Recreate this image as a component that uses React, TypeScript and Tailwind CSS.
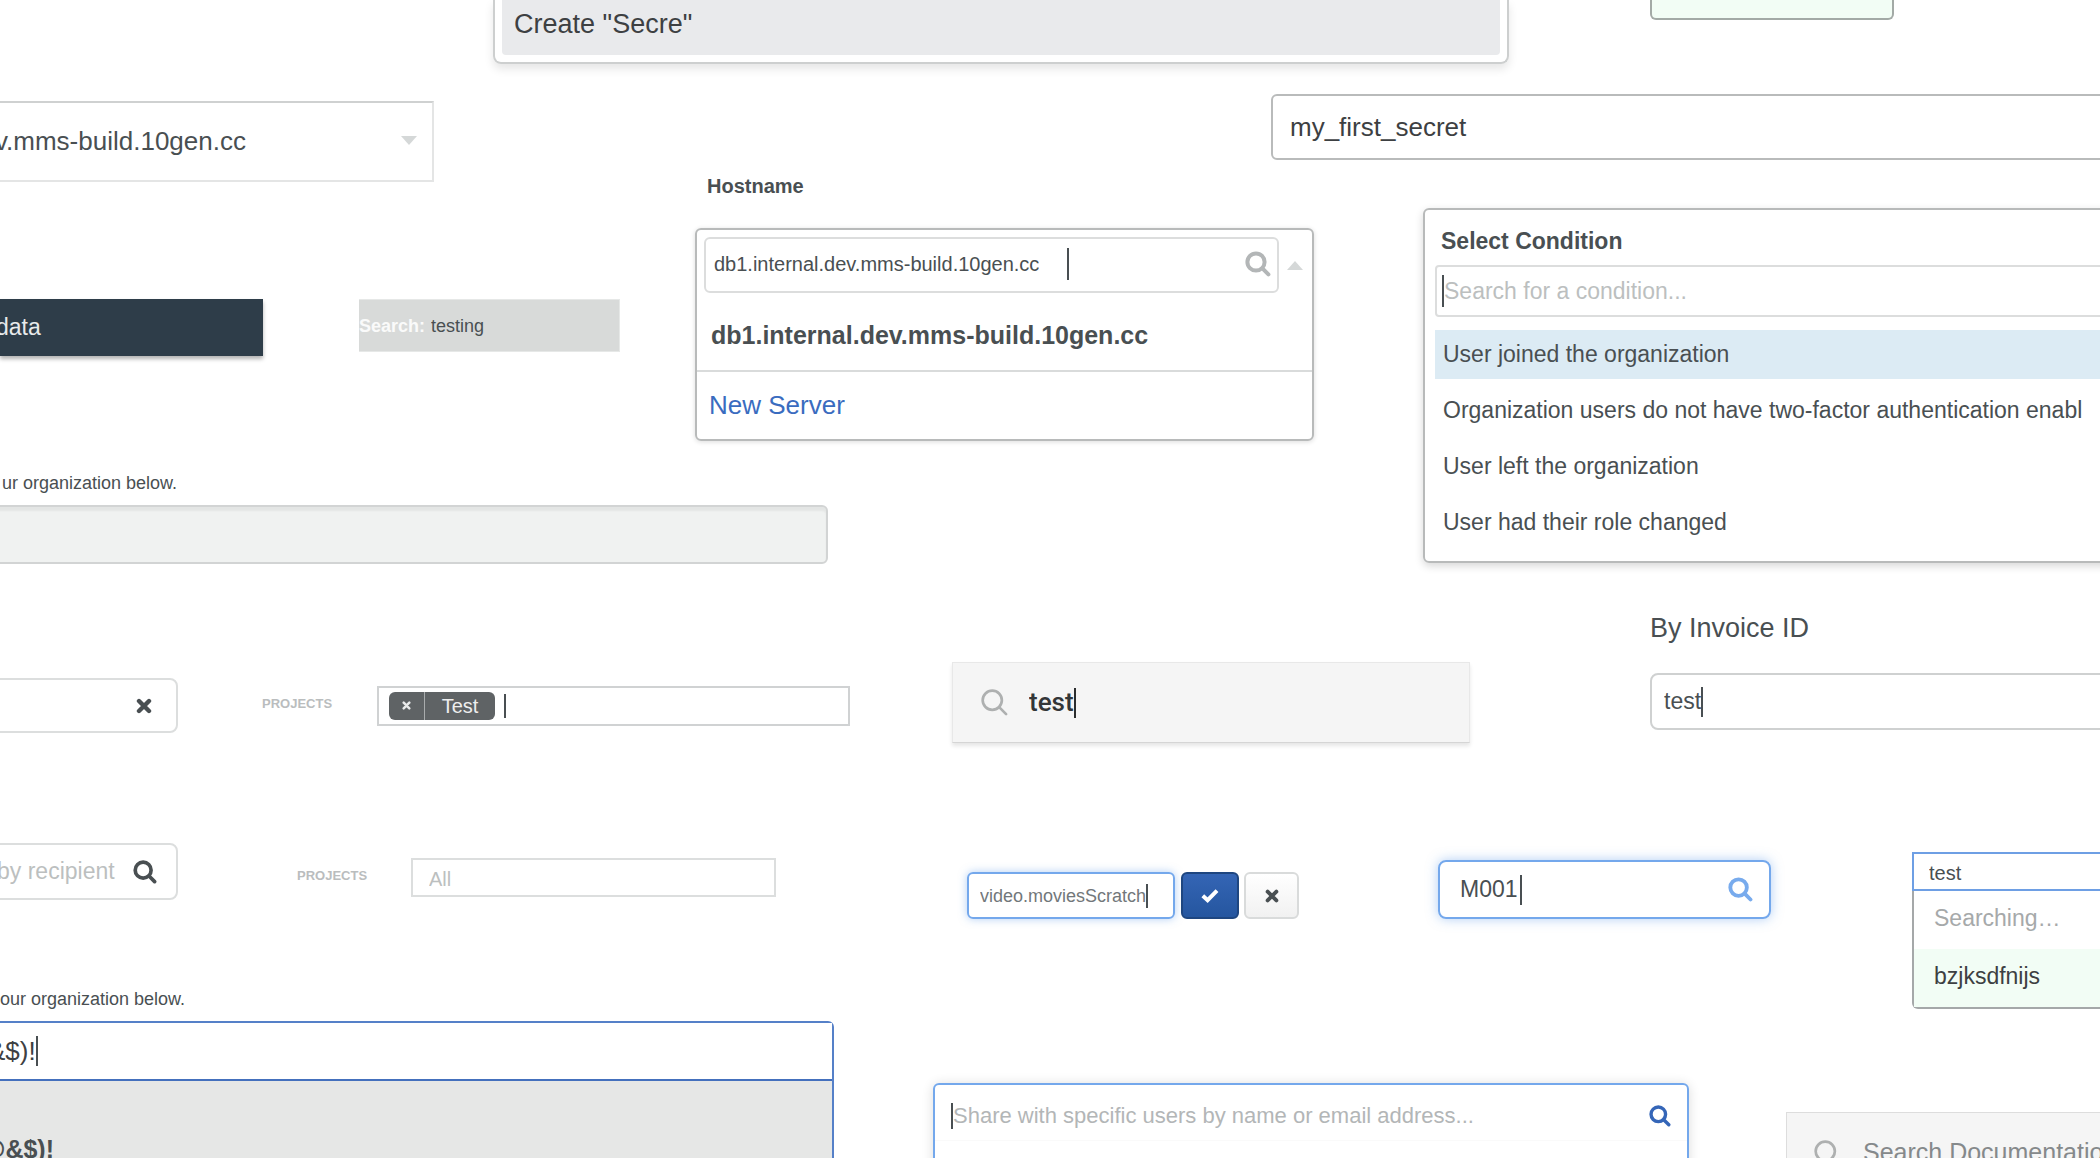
// src/App.tsx
import type { ReactNode } from 'react';

interface CaretProps {
  className?: string;
}

interface IconProps {
  className?: string;
  weight?: number;
}

interface ProjectsProps {
  id: string;
  children: ReactNode;
}

// blinking cursor of a focused text box
function Caret({ className = 'h-8 bg-[#494f52]' }: CaretProps) {
  return <span className={`w-[2px] shrink-0 ${className}`} />;
}

function SearchIcon({ className = 'size-6', weight = 4 }: IconProps) {
  return (
    <svg className={`shrink-0 ${className}`} viewBox="0 0 26 26" fill="none" stroke="currentColor" strokeWidth={weight} strokeLinecap="round" aria-hidden="true">
      <circle cx="11" cy="11" r="8.6" />
      <path d="M17.4 17.4 23.4 23.4" />
    </svg>
  );
}

function CrossIcon({ className = 'size-4' }: IconProps) {
  return (
    <svg className={`shrink-0 ${className}`} viewBox="0 0 16 16" fill="none" stroke="currentColor" strokeWidth="4.4" strokeLinecap="round" aria-hidden="true">
      <path d="M3 3 13 13M13 3 3 13" />
    </svg>
  );
}

function Projects({ id, children }: ProjectsProps) {
  return (
    <>
      <label htmlFor={id} className="w-[115px] pb-1 text-[13px] leading-5 font-bold text-[#babdbe]">PROJECTS</label>
      {children}
    </>
  );
}

const conditions = [
  'User joined the organization',
  'Organization users do not have two-factor authentication enabl',
  'User left the organization',
  'User had their role changed',
];

export default function App() {
  return (
    <main className="h-screen overflow-hidden bg-white font-['Liberation_Sans',Arial,sans-serif] text-[#494f52]">
      {/* tops of the first row */}
      <div className="flex items-start">
        <div className="ml-[493px] h-16 w-[1016px] rounded-b-lg border-2 border-t-0 border-[#cdcfcf] px-[7px] pb-[7px] shadow-[0_5px_10px_rgba(0,0,0,0.1)]">
          <button type="button" className="flex h-full w-full items-center rounded-b-sm bg-[#e9eaec] pb-[6px] pl-3 text-[27px] text-[#3d4042]">
            Create "Secre"
          </button>
        </div>
        <div className="ml-[141px] h-5 w-[244px] rounded-b-md border-2 border-t-0 border-[#a3aaa6] bg-[#f2fdf5]" />
      </div>

      <div className="flex items-start">
        {/* left column */}
        <div className="w-[695px] shrink-0">
          <div className="relative mt-[37px] h-[81px] w-[434px]">
            <select aria-label="Host" className="-ml-5 h-full w-[454px] appearance-none border-2 border-[#e4e5e5] border-t-[#cfd1d1] bg-white pl-[13px] text-[26px]">
              <option>v.mms-build.10gen.cc</option>
            </select>
            <svg className="absolute top-[35px] right-[17px] h-[9px] w-4 fill-[#d5d8d8]" viewBox="0 0 16 9" aria-hidden="true">
              <path d="M0 0h16L8 9z" />
            </svg>
          </div>

          <div className="mt-[117px] flex items-start">
            <button type="button" className="h-[57px] w-[263px] bg-[#2e3d49] text-left text-[23px] text-[#e8eaeb] shadow-[0_3px_4px_rgba(0,0,0,0.3)]">
              <span className="-ml-1">data</span>
            </button>
            <label className="ml-24 flex h-[53px] w-[261px] items-center gap-[6px] border border-[#e6e8e7] border-l-0 bg-[#d8dad9] text-lg">
              <span className="font-bold text-[#fafafa]">Search:</span>
              <input type="text" defaultValue="testing" className="min-w-0 flex-1 bg-transparent outline-none" />
            </label>
          </div>

          <label htmlFor="org-empty" className="mt-[113px] block pl-[2px] text-lg">ur organization below.</label>
          <input id="org-empty" type="text" className="mt-2 -ml-4 h-[59px] w-[844px] rounded-md border-2 border-[#d2d4d4] bg-[#f0f2f1] shadow-[inset_0_4px_2px_rgba(0,0,0,0.05)] outline-none" />

          <div className="mt-[114px] flex items-center">
            <div className="-ml-4 flex h-[55px] w-[194px] items-center rounded-lg border-2 border-[#dcdede]">
              <input type="text" aria-label="Recipient" className="min-w-0 flex-1 outline-none" />
              <button type="button" aria-label="Clear" className="mr-6">
                <CrossIcon />
              </button>
            </div>
            <div className="ml-[84px] flex items-center">
              <Projects id="projects-tagged">
                <div className="flex h-10 w-[473px] items-center border-2 border-[#d0d2d3] pl-[10px]">
                  <button type="button" aria-label="Remove Test" className="flex h-7 w-9 items-center justify-center rounded-l-md border-r border-[#a9acad] bg-[#5f6365] text-[#e9eaea]">
                    <CrossIcon className="size-[9px]" />
                  </button>
                  <span className="mr-[9px] flex h-7 w-[70px] items-center justify-center rounded-r-md bg-[#5f6365] text-xl text-[#eeeeee]">Test</span>
                  <Caret className="h-6 bg-[#494f52]" />
                  <input id="projects-tagged" type="text" className="min-w-0 flex-1 outline-none" />
                </div>
              </Projects>
            </div>
          </div>

          <div className="mt-[110px] flex items-center">
            <div className="-ml-4 flex h-[57px] w-[194px] items-center rounded-lg border-2 border-[#dcdede]">
              <input type="text" aria-label="Search by recipient" placeholder="by recipient" className="min-w-0 flex-1 pl-[11px] text-[23px] outline-none placeholder:text-[#bcbfbf]" />
              <button type="button" aria-label="Search" className="mr-[19px]">
                <SearchIcon />
              </button>
            </div>
            <div className="mt-3 ml-[119px] flex items-center">
              <Projects id="projects-all">
                <input id="projects-all" type="text" placeholder="All" className="-ml-px h-[39px] w-[365px] border-2 border-[#dcdede] pt-1 pl-4 text-xl outline-none placeholder:text-[#bcbfbf]" />
              </Projects>
            </div>
          </div>

          <label htmlFor="org-typed" className="mt-[85px] block text-lg">our organization below.</label>
          <div className="mt-2 -ml-4 h-[240px] w-[850px] rounded-t-md border-2 border-[#5580c8] bg-[#e6e7e6]">
            <div className="flex h-[58px] items-center border-b-2 border-[#4470bd] bg-white pl-[2px] text-[26px] text-[#3d4042]">
              <input id="org-typed" type="text" defaultValue="&$)!" className="field-sizing-content outline-none" />
              <Caret className="h-[30px] bg-[#494f52]" />
            </div>
            <button type="button" className="mt-[50px] -ml-[5px] w-full text-left text-[25px] font-bold">@&$)!</button>
          </div>
        </div>

        {/* right side */}
        <div className="min-w-0 flex-1">
          <input
            type="text"
            aria-label="Secret name"
            defaultValue="my_first_secret"
            className="mt-[30px] ml-[576px] block h-[66px] w-full rounded-md border-2 border-[#b9bbbb] pl-[17px] text-[26px] text-[#3d4042] outline-none"
          />

          <div className="flex items-start">
            <div className="mt-3 w-[619px] shrink-0">
              <label htmlFor="hostname" className="ml-3 block text-xl font-bold">Hostname</label>
              <div className="mt-7 flex h-[213px] flex-col rounded-md border-2 border-[#b8baba] shadow-[0_1px_5px_rgba(0,0,0,0.14)]">
                <div className="mt-[7px] flex items-center pl-[7px]">
                  <div className="flex h-14 w-[575px] items-center rounded-md border-2 border-[#dcdddd] pr-[6px] pb-[2px] pl-2">
                    <input id="hostname" type="text" defaultValue="db1.internal.dev.mms-build.10gen.cc" className="mr-7 field-sizing-content text-xl outline-none" />
                    <Caret />
                    <SearchIcon className="ml-auto size-[26px] text-[#b3b6b7]" />
                  </div>
                  <svg className="ml-2 h-[9px] w-4 fill-[#d5d8d8]" viewBox="0 0 16 9" aria-hidden="true">
                    <path d="M0 9h16L8 0z" />
                  </svg>
                </div>
                <button type="button" className="h-[79px] border-b-2 border-[#d9dbdb] pt-2 pl-[14px] text-left text-[25px] font-bold">
                  db1.internal.dev.mms-build.10gen.cc
                </button>
                <a href="#new-server" className="flex flex-1 items-center pl-3 text-[26px] text-[#3a6cbf]">New Server</a>
              </div>
            </div>

            <div className="mt-12 -mr-20 ml-[109px] h-[355px] min-w-0 flex-1 rounded-md border-2 border-[#b8baba] px-[10px] text-[23px] shadow-[0_3px_9px_rgba(0,0,0,0.16)]">
              <label htmlFor="condition" className="block pt-2 pl-[6px] leading-[47px] font-bold">Select Condition</label>
              <div className="flex h-[52px] items-center rounded-sm border-2 border-[#dcdddd] pl-[5px]">
                <Caret />
                <input id="condition" type="text" placeholder="Search for a condition..." className="min-w-0 flex-1 outline-none placeholder:text-[#bcbfbf]" />
              </div>
              <ul className="mt-[13px] flex flex-col gap-[7px]">
                {conditions.map((condition, i) => (
                  <li key={condition} className={i === 0 ? 'bg-[#dcebf4]' : ''}>
                    <button type="button" className="h-[49px] w-full pl-2 text-left whitespace-nowrap">{condition}</button>
                  </li>
                ))}
              </ul>
            </div>
          </div>

          <div className="flex items-start">
            <label className="mt-[99px] ml-[257px] flex h-[81px] w-[518px] shrink-0 items-center border border-[#e8e8e8] border-b-[#d5d5d5] bg-[#f5f5f5] pl-[27px] font-['Roboto',sans-serif] text-[26px] font-medium text-[#333638] shadow-[0_3px_4px_rgba(0,0,0,0.1)]">
              <SearchIcon className="mr-[20px] size-[29px] text-[#aeb0b0]" weight={2.4} />
              <input type="text" aria-label="Search" defaultValue="test" className="field-sizing-content outline-none" />
              <Caret className="h-[30px] bg-[#2b2d2e]" />
            </label>
            <div className="mt-[47px] -mr-20 ml-[180px] min-w-0 flex-1">
              <label htmlFor="invoice" className="block text-[27px] leading-9">By Invoice ID</label>
              <div className="mt-[27px] flex h-[57px] items-center rounded-lg border-2 border-[#cfd1d1] pl-3 text-[23px]">
                <input id="invoice" type="text" defaultValue="test" className="field-sizing-content outline-none" />
                <Caret className="h-[30px] bg-[#494f52]" />
              </div>
            </div>
          </div>

          <div className="flex items-start">
            <div className="mt-[129px] ml-[272px] flex h-[47px] shrink-0 items-stretch">
              <div className="mr-[6px] flex w-[208px] items-center rounded-md border-2 border-[#74a8ec] pl-[11px] text-lg text-[#72777a] shadow-[0_0_9px_rgba(102,160,235,0.5)]">
                <input type="text" aria-label="Namespace" defaultValue="video.moviesScratch" className="field-sizing-content outline-none" />
                <Caret className="h-6 bg-[#494f52]" />
              </div>
              <button type="button" aria-label="Save" className="mr-[5px] flex w-[58px] items-center justify-center rounded-md border-2 border-[#1e4680] bg-linear-to-b from-[#3465b5] to-[#25569f] text-white">
                <svg className="h-[14px] w-[18px]" viewBox="0 0 18 14" fill="none" stroke="currentColor" strokeWidth="4" aria-hidden="true">
                  <path d="M1.8 6.8 6.6 11.2 16 1.6" />
                </svg>
              </button>
              <button type="button" aria-label="Cancel" className="flex w-[55px] items-center justify-center rounded-md border-2 border-[#d9dbdb] bg-linear-to-b from-white to-[#f1f1f1]">
                <CrossIcon className="size-[14px]" />
              </button>
            </div>
            <div className="mt-[117px] ml-[139px] flex h-[59px] w-[333px] shrink-0 items-center rounded-lg border-2 border-[#74a8ec] pr-4 pl-5 text-[23px] shadow-[0_0_12px_rgba(102,160,235,0.5)]">
              <input type="text" aria-label="Course" defaultValue="M001" className="mr-[2px] field-sizing-content outline-none" />
              <Caret className="h-[30px] bg-[#494f52]" />
              <SearchIcon className="ml-auto size-[25px] text-[#78abed]" />
            </div>
            <div className="mt-[109px] -mr-20 ml-[141px] h-[156px] min-w-0 flex-1">
              <input type="text" aria-label="Find user" defaultValue="test" className="block h-[39px] w-full border-2 border-[#6e9fe4] pt-1 pl-[15px] text-xl outline-none" />
              <div className="rounded-b-md border-2 border-t-0 border-[#a5a8a9] text-[23px]">
                <p className="h-[58px] pl-5 leading-[54px] text-[#a6a9aa]">Searching…</p>
                <button type="button" className="h-[58px] w-full bg-[#f2fdf5] pb-1 pl-5 text-left text-[#3d4042]">bzjksdfnijs</button>
              </div>
            </div>
          </div>

          <div className="flex items-start">
            <div className="mt-[75px] ml-[238px] h-[160px] w-[756px] shrink-0 rounded-md border-2 border-[#74a8ec] shadow-[0_1px_12px_rgba(0,0,0,0.14)]">
              <div className="flex h-14 items-center border-b border-[#fafafa] pt-[6px] pr-4 pl-4">
                <Caret className="h-[26px] bg-[#494f52]" />
                <input type="text" aria-label="Share with" placeholder="Share with specific users by name or email address..." className="min-w-0 flex-1 text-[22px] outline-none placeholder:text-[#b3b6b7]" />
                <SearchIcon className="size-[22px] text-[#3566b8]" />
              </div>
            </div>
            <label className="mt-[104px] -mr-20 ml-[97px] flex h-[82px] min-w-0 flex-1 items-center border border-[#dddddd] bg-[#f5f5f5] pl-[26px]">
              <SearchIcon className="mr-[21px] size-[29px] text-[#aeb0b0]" weight={2.4} />
              <input type="search" placeholder="Search Documentation" aria-label="Search Documentation" className="min-w-0 flex-1 text-[25px] outline-none placeholder:text-[#85898b]" />
            </label>
          </div>
        </div>
      </div>
    </main>
  );
}
